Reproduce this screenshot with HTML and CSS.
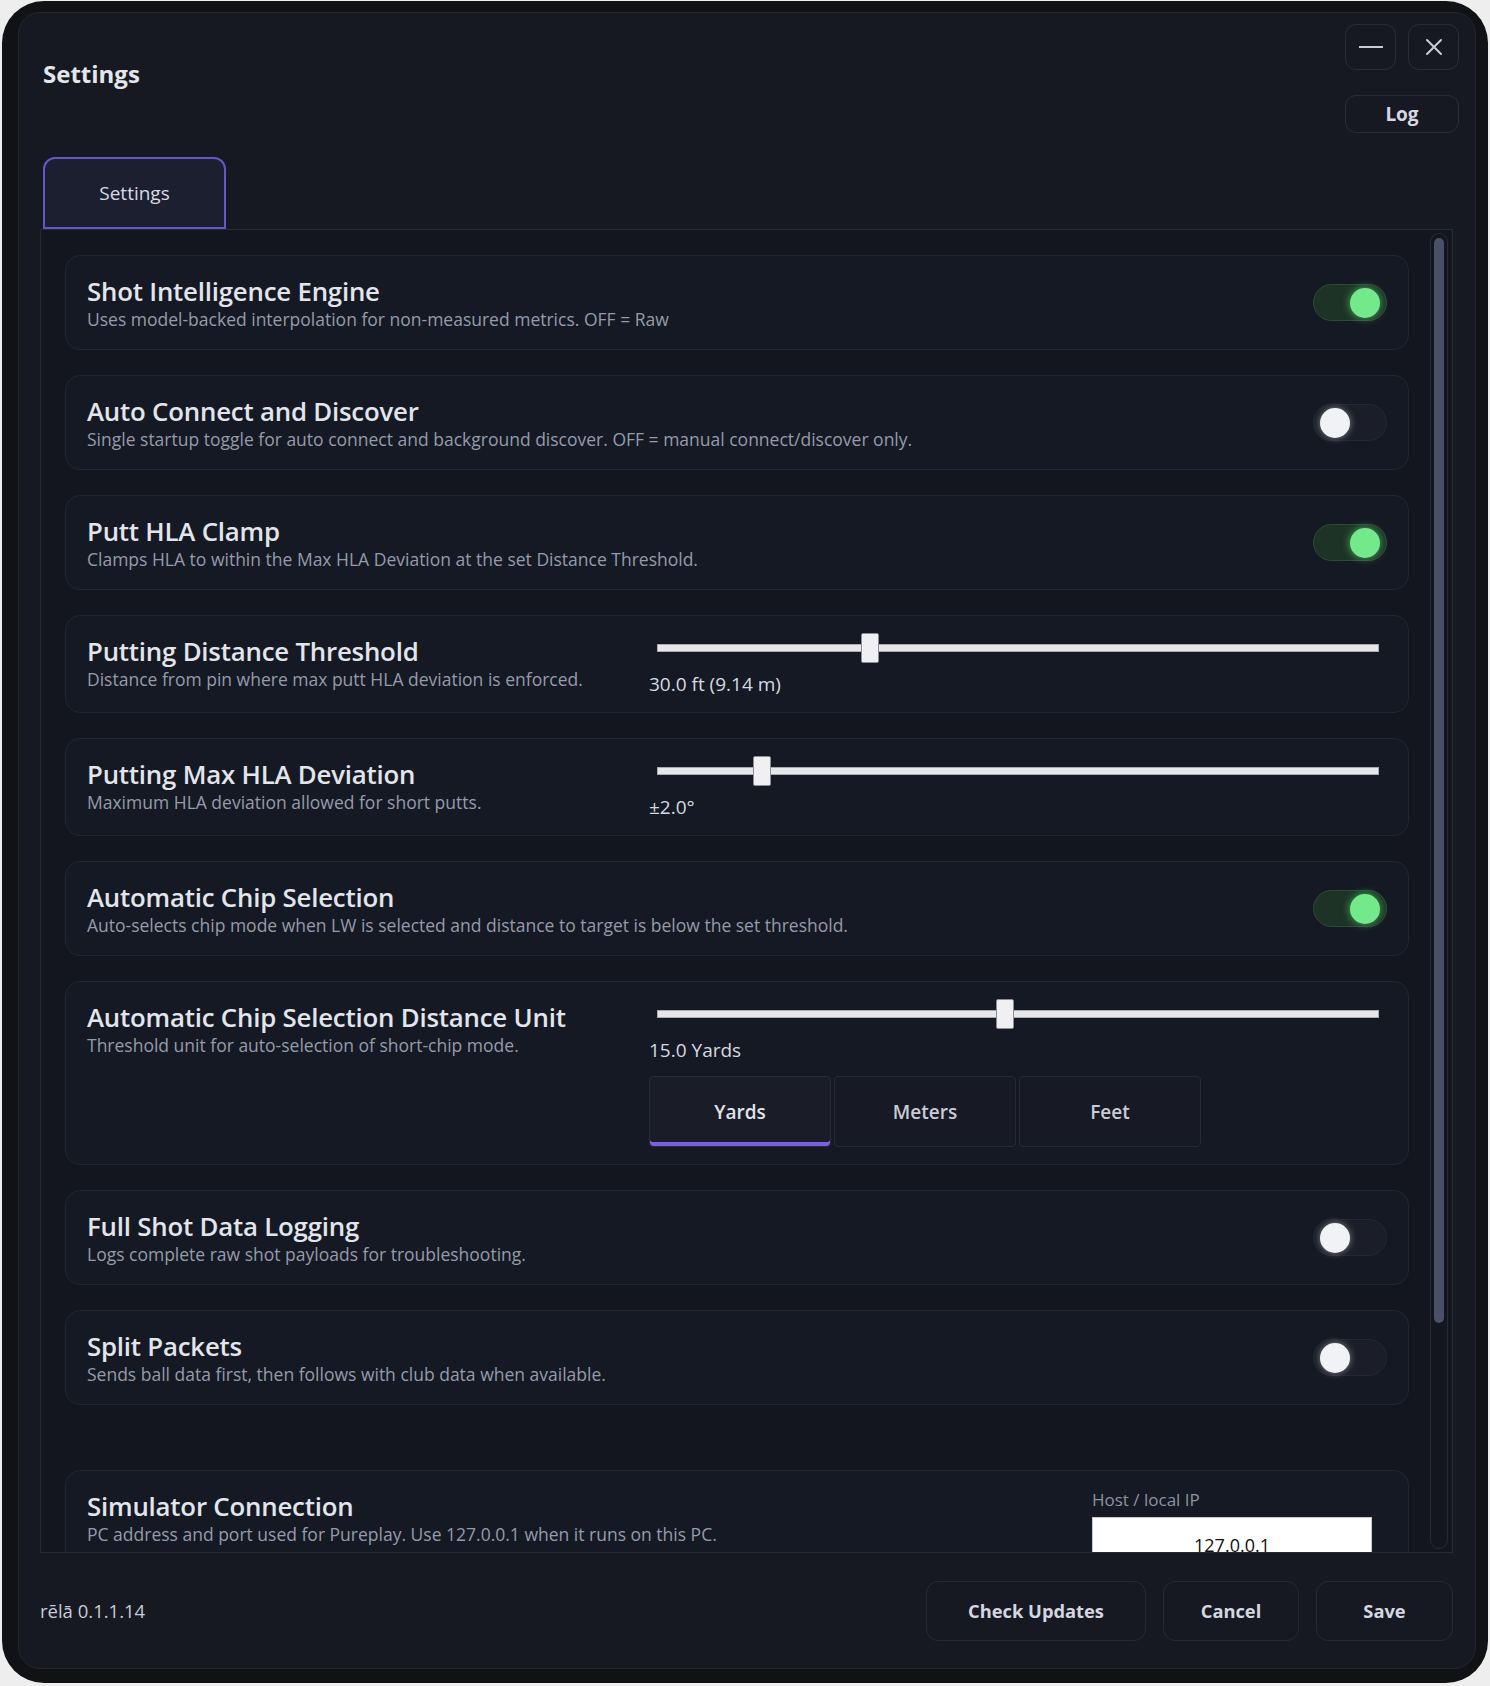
FILE: index.html
```html
<!DOCTYPE html>
<html lang="en">
<head>
<meta charset="utf-8">
<title>Settings</title>
<link rel="stylesheet" href="styles.css">
</head>
<body>
<div class="window">
  <div class="panel">
    <header class="header">
      <h1 class="title">Settings</h1>
      <div class="win-actions">
        <div class="win-row">
          <button class="win-btn" aria-label="Minimize">
            <svg width="24" height="4" viewBox="0 0 24 4"><line x1="0" y1="2" x2="24" y2="2" stroke="#c9ccd6" stroke-width="2"/></svg>
          </button>
          <button class="win-btn" aria-label="Close">
            <svg width="18" height="18" viewBox="0 0 18 18"><path d="M2 2 L16 16 M16 2 L2 16" stroke="#c9ccd6" stroke-width="2" stroke-linecap="round" fill="none"/></svg>
          </button>
        </div>
        <button class="log-btn">Log</button>
      </div>
    </header>

    <div class="tabs">
      <div class="tab tab-active">Settings</div>
    </div>

    <div class="content">
      <div class="list">
        <div class="card">
          <div class="text">
            <div class="card-title">Shot Intelligence Engine</div>
            <div class="card-desc">Uses model-backed interpolation for non-measured metrics. OFF = Raw</div>
          </div>
          <div class="toggle toggle-on"><span class="knob"></span></div>
        </div>

        <div class="card">
          <div class="text">
            <div class="card-title">Auto Connect and Discover</div>
            <div class="card-desc">Single startup toggle for auto connect and background discover. OFF = manual connect/discover only.</div>
          </div>
          <div class="toggle"><span class="knob"></span></div>
        </div>

        <div class="card">
          <div class="text">
            <div class="card-title">Putt HLA Clamp</div>
            <div class="card-desc">Clamps HLA to within the Max HLA Deviation at the set Distance Threshold.</div>
          </div>
          <div class="toggle toggle-on"><span class="knob"></span></div>
        </div>

        <div class="card card-slider">
          <div class="text">
            <div class="card-title">Putting Distance Threshold</div>
            <div class="card-desc">Distance from pin where max putt HLA deviation is enforced.</div>
          </div>
          <div class="control">
            <div class="slider"><div class="track"><span class="thumb" style="left: calc(29.4% - 9px)"></span></div></div>
            <div class="value">30.0 ft (9.14 m)</div>
          </div>
        </div>

        <div class="card card-slider">
          <div class="text">
            <div class="card-title">Putting Max HLA Deviation</div>
            <div class="card-desc">Maximum HLA deviation allowed for short putts.</div>
          </div>
          <div class="control">
            <div class="slider"><div class="track"><span class="thumb" style="left: calc(14.4% - 9px)"></span></div></div>
            <div class="value">±2.0°</div>
          </div>
        </div>

        <div class="card">
          <div class="text">
            <div class="card-title">Automatic Chip Selection</div>
            <div class="card-desc">Auto-selects chip mode when LW is selected and distance to target is below the set threshold.</div>
          </div>
          <div class="toggle toggle-on"><span class="knob"></span></div>
        </div>

        <div class="card card-slider card-unit">
          <div class="text">
            <div class="card-title">Automatic Chip Selection Distance Unit</div>
            <div class="card-desc">Threshold unit for auto-selection of short-chip mode.</div>
          </div>
          <div class="control">
            <div class="slider"><div class="track"><span class="thumb" style="left: calc(48.2% - 9px)"></span></div></div>
            <div class="value">15.0 Yards</div>
            <div class="segments">
              <button class="seg seg-active">Yards</button>
              <button class="seg">Meters</button>
              <button class="seg">Feet</button>
            </div>
          </div>
        </div>

        <div class="card">
          <div class="text">
            <div class="card-title">Full Shot Data Logging</div>
            <div class="card-desc">Logs complete raw shot payloads for troubleshooting.</div>
          </div>
          <div class="toggle"><span class="knob"></span></div>
        </div>

        <div class="card">
          <div class="text">
            <div class="card-title">Split Packets</div>
            <div class="card-desc">Sends ball data first, then follows with club data when available.</div>
          </div>
          <div class="toggle"><span class="knob"></span></div>
        </div>

        <div class="card card-section">
          <div class="text">
            <div class="card-title">Simulator Connection</div>
            <div class="card-desc">PC address and port used for Pureplay. Use 127.0.0.1 when it runs on this PC.</div>
          </div>
          <div class="field">
            <div class="field-label">Host / local IP</div>
            <div class="input">127.0.0.1</div>
          </div>
        </div>
      </div>
      <div class="scrollbar"><div class="scroll-thumb"></div></div>
    </div>

    <footer class="footer">
      <span class="version">rēlā 0.1.1.14</span>
      <div class="actions">
        <button class="btn btn-updates">Check Updates</button>
        <button class="btn btn-cancel">Cancel</button>
        <button class="btn btn-save">Save</button>
      </div>
    </footer>
  </div>
</div>
</body>
</html>
```

FILE: styles.css
```css
* { box-sizing: border-box; }

html, body {
  margin: 0;
  padding: 0;
}

body {
  background: #eeeeef;
  font-family: "Open Sans", "Noto Sans", "Liberation Sans", sans-serif;
  color: #e3e5ec;
  width: 1490px;
  height: 1686px;
  overflow: hidden;
}

button {
  font-family: inherit;
  cursor: pointer;
}

.window {
  margin: 1px 0 0 2px;
  width: 1486px;
  height: 1682px;
  padding: 11px 12px 14px 16px;
  background: #101216;
  border-radius: 42px;
}

.panel {
  height: 100%;
  display: flex;
  flex-direction: column;
  background: #161921;
  border: 1px solid #23262f;
  border-radius: 22px;
}

/* header */
.header {
  height: 120px;
  display: flex;
  justify-content: space-between;
  align-items: flex-start;
  padding: 11px 16px 0 24px;
}

.title {
  margin: 35px 0 0 0;
  font-size: 24px;
  line-height: 30px;
  font-weight: 700;
  color: #e4e6ec;
}

.win-actions {
  width: 114px;
  display: flex;
  flex-direction: column;
  gap: 25px;
}

.win-row {
  display: flex;
  gap: 12px;
}

.win-btn {
  width: 51px;
  height: 46px;
  display: flex;
  align-items: center;
  justify-content: center;
  background: #161921;
  border: 1px solid #2a2d38;
  border-radius: 11px;
  padding: 0;
}

.log-btn {
  height: 38px;
  width: 114px;
  background: #161921;
  border: 1px solid #2a2d38;
  border-radius: 11px;
  color: #d5d8e1;
  font-size: 19px;
  font-weight: 700;
  padding: 0;
}

/* tabs */
.tabs {
  margin-top: 24px;
  padding-left: 24px;
  display: flex;
}

.tab {
  width: 183px;
  height: 72px;
  display: flex;
  align-items: center;
  justify-content: center;
  font-size: 19px;
  color: #d8dbe3;
}

.tab-active {
  background: #1c1f2f;
  border: 2px solid #6657c6;
  border-radius: 12px 12px 0 0;
}

/* content */
.content {
  margin: 0 22px 0 21px;
  height: 1324px;
  border: 1px solid #262a35;
  background: #13161e;
  display: flex;
  padding: 0 4px 0 24px;
  gap: 21px;
}

.list {
  flex: 1;
  overflow: hidden;
  display: flex;
  flex-direction: column;
  gap: 25px;
  padding-top: 25px;
}

.card {
  flex-shrink: 0;
  display: flex;
  align-items: center;
  padding: 17px 21px;
  background: #151923;
  border: 1px solid #222634;
  border-radius: 15px;
}

.card-slider {
  align-items: flex-start;
}

.card-unit {
  padding-bottom: 17px;
}

.card-section {
  margin-top: 40px;
  align-items: flex-start;
}

.text {
  flex: 1;
  min-width: 0;
  padding: 2px 0 1px;
}

.card-title {
  font-size: 25.8px;
  line-height: 32px;
  font-weight: 600;
  color: #e3e5ec;
  letter-spacing: -0.2px;
  white-space: nowrap;
}

.card-desc {
  font-size: 17.5px;
  line-height: 24px;
  color: #959bab;
  white-space: nowrap;
}

/* toggle */
.toggle {
  width: 74px;
  height: 37px;
  border-radius: 19px;
  border: 1px solid #242834;
  background: #1b1e28;
  display: flex;
  align-items: center;
  padding: 0 6px;
  flex-shrink: 0;
}

.knob {
  width: 30px;
  height: 30px;
  border-radius: 50%;
  background: #f1f2f6;
  box-shadow: 0 0 7px rgba(255, 255, 255, 0.45);
}

.toggle-on {
  background: #1c3326;
  border-color: #2d4a38;
  justify-content: flex-end;
}

.toggle-on .knob {
  background: #74e98b;
  box-shadow: 0 0 9px rgba(96, 230, 120, 0.7);
}

/* slider */
.control {
  width: 738px;
  flex-shrink: 0;
  display: flex;
  flex-direction: column;
}

.slider {
  height: 30px;
  padding: 0 8px;
  display: flex;
  align-items: center;
}

.track {
  position: relative;
  flex: 1;
  height: 8px;
  background: #e7e7ea;
  border: 1px solid #a9aab2;
}

.thumb {
  position: absolute;
  top: -12px;
  width: 18px;
  height: 30px;
  background: #f0f0f2;
  border: 1px solid #8c8d96;
  border-radius: 2px;
}

.value {
  margin-top: 10px;
  font-size: 19px;
  line-height: 22px;
  color: #d6d9e1;
}

.segments {
  margin-top: 15px;
  display: flex;
  gap: 3px;
}

.seg {
  position: relative;
  width: 182px;
  height: 71px;
  background: #171a24;
  border: 1px solid #272a35;
  border-radius: 4px;
  color: #c9ccd6;
  font-size: 19px;
  font-weight: 600;
  padding: 0;
}

.seg-active {
  background: #1a1d28;
  color: #e1e3ea;
  box-shadow: inset 0 -4px 0 #7a5ee4;
}

/* simulator field */
.field {
  width: 280px;
  margin-right: 15px;
  flex-shrink: 0;
}

.field-label {
  font-size: 17px;
  line-height: 24px;
  color: #8c92a2;
}

.input {
  margin-top: 5px;
  height: 54px;
  background: #ffffff;
  border: 1px solid #c9c9c9;
  color: #111111;
  font-size: 18px;
  line-height: 54px;
  text-align: center;
}

/* scrollbar */
.scrollbar {
  width: 18px;
  margin: 3px 0;
  border: 1px solid #262a37;
  border-radius: 9px;
  padding: 4px 3px;
  flex-shrink: 0;
}

.scroll-thumb {
  width: 10px;
  height: 1085px;
  border-radius: 5px;
  background: #4a5068;
}

/* footer */
.footer {
  flex: 1;
  display: flex;
  align-items: center;
  justify-content: space-between;
  padding: 0 22px 0 21px;
}

.version {
  font-size: 18.5px;
  color: #c9ccd6;
  font-weight: 500;
}

.actions {
  display: flex;
  gap: 17px;
}

.btn {
  height: 60px;
  background: #161921;
  border: 1px solid #272a35;
  border-radius: 12px;
  color: #d4d7e0;
  font-size: 18.3px;
  font-weight: 700;
  padding: 0;
}

.btn-updates { width: 220px; }
.btn-cancel { width: 136px; }
.btn-save { width: 137px; }
```
